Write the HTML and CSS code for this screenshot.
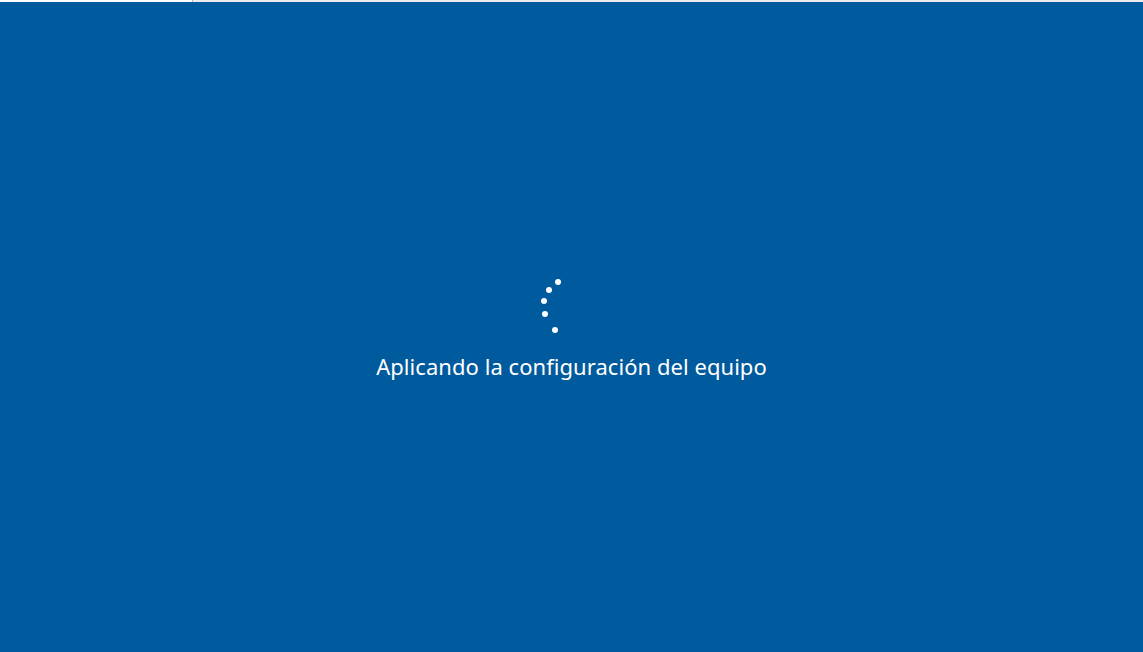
FILE: index.html
```html
<!DOCTYPE html>
<html lang="es">
<head>
<meta charset="utf-8">
<title>Aplicando la configuración del equipo</title>
<link rel="stylesheet" href="styles.css">
</head>
<body>
<div class="topbar"><div class="tb-left"></div><div class="tb-sep"></div><div class="tb-right"></div></div>
<main class="screen">
  <div class="spinner">
    <span class="dot" style="left:19px;top:1px"></span>
    <span class="dot" style="left:10px;top:9px"></span>
    <span class="dot" style="left:5px;top:20px"></span>
    <span class="dot" style="left:6px;top:33px"></span>
    <span class="dot" style="left:16px;top:49px"></span>
  </div>
  <p class="message">Aplicando la configuración del equipo</p>
</main>
</body>
</html>
```
FILE: styles.css
```css
html, body {
  margin: 0;
  padding: 0;
  height: 100%;
}
body {
  background: #005a9e;
  display: flex;
  flex-direction: column;
  font-family: "Noto Sans", "Open Sans", sans-serif;
  overflow: hidden;
}
.topbar {
  display: flex;
  height: 2px;
  flex: none;
}
.tb-left { width: 192px; background: #ffffff; }
.tb-sep { width: 1px; background: #b8b8b8; }
.tb-right { flex: 1; background: #ececec; }
.screen {
  flex: 1;
  display: flex;
  flex-direction: column;
  align-items: center;
  padding-top: 276px;
}
.spinner {
  position: relative;
  width: 26px;
  height: 56px;
  margin-left: -46px;
}
.dot {
  position: absolute;
  width: 6px;
  height: 6px;
  border-radius: 50%;
  background: #ffffff;
}
.message {
  margin: 17px 0 0;
  color: #ffffff;
  font-size: 22px;
  line-height: 30px;
  letter-spacing: 0.05px;
}
```
